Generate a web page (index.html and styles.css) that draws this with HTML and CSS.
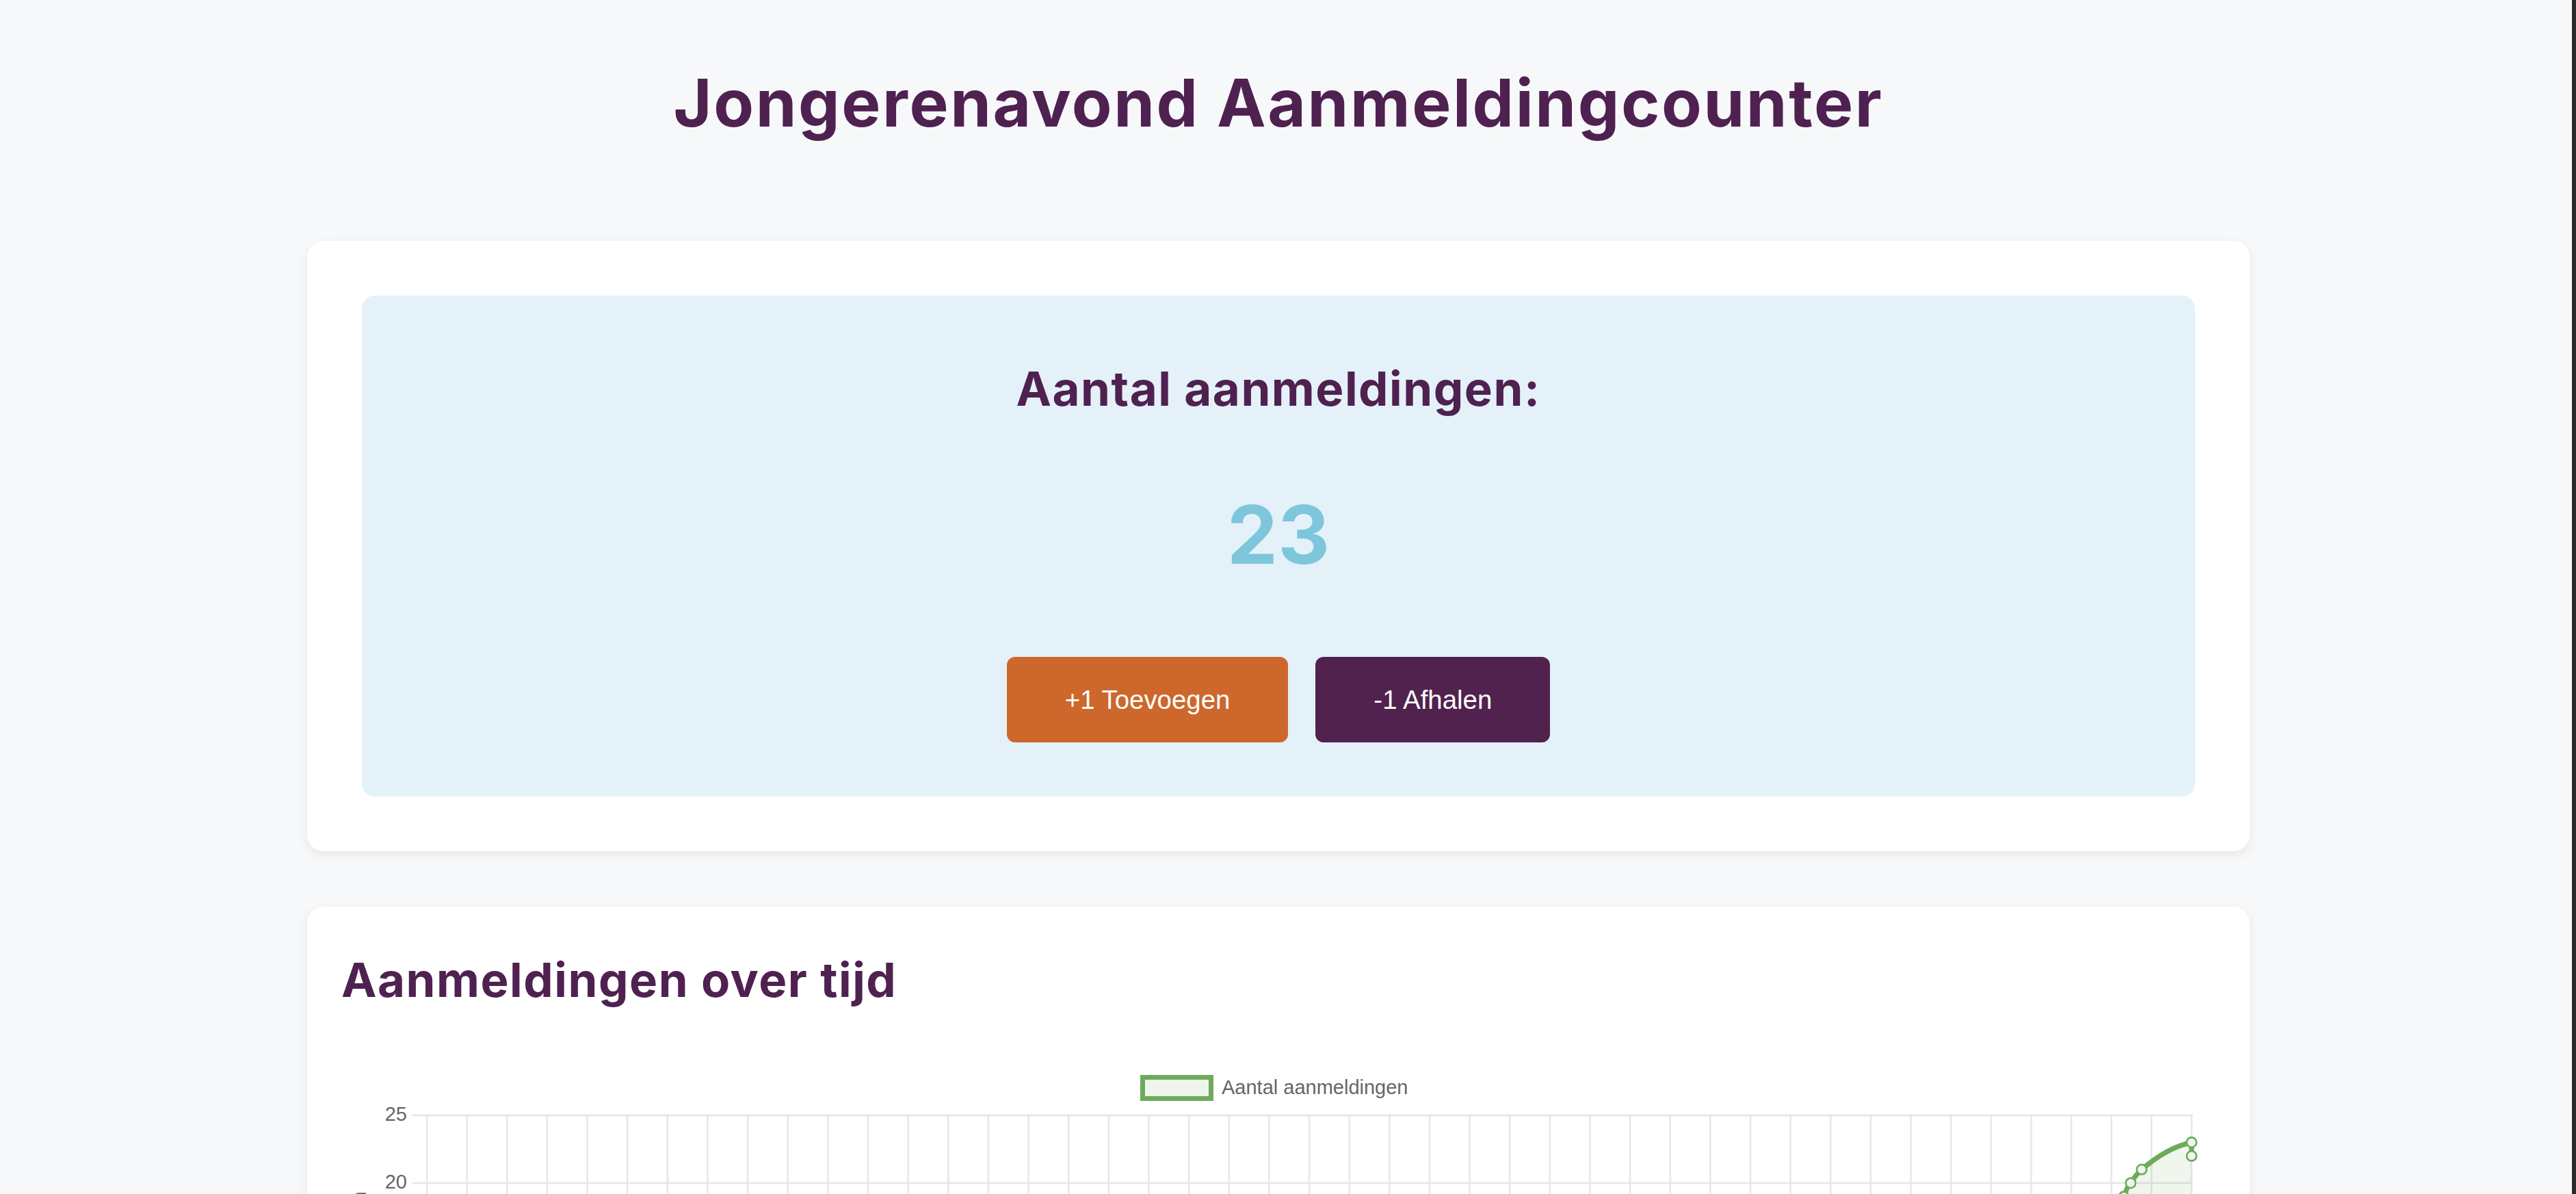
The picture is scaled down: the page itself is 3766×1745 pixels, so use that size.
FILE: index.html
```html
<!DOCTYPE html>
<html lang="nl">
<head>
<meta charset="utf-8">
<title>Jongerenavond Aanmeldingcounter</title>
<link rel="stylesheet" href="styles.css">
</head>
<body>
<div class="page">
  <div class="container">
    <h1 class="title">Jongerenavond Aanmeldingcounter</h1>

    <section class="card counter-card">
      <div class="counter-box">
        <h2 class="counter-label">Aantal aanmeldingen:</h2>
        <div class="count">23</div>
        <div class="actions">
          <button class="btn btn-add">+1 Toevoegen</button>
          <button class="btn btn-remove">-1 Afhalen</button>
        </div>
      </div>
    </section>

    <section class="card chart-card">
      <h2 class="chart-title">Aanmeldingen over tijd</h2>
      <svg class="chart" width="2740" height="700" viewBox="0 0 2740 700">
        <defs>
          <pattern id="vgrid" patternUnits="userSpaceOnUse" x="123.8" y="0" width="58.636" height="700">
            <rect x="0" y="0" width="2.4" height="700" fill="#e5e5e5"/>
          </pattern>
        </defs>
        <!-- legend -->
        <rect x="1171.5" y="53.5" width="100" height="31" fill="#eef5ec" stroke="#6dab5b" stroke-width="7"/>
        <text class="lbl" x="1287" y="78">Aantal aanmeldingen</text>

        <!-- vertical grid -->
        <rect x="123.8" y="109" width="2583.6" height="514" fill="url(#vgrid)"/>
        <!-- horizontal grid -->
        <g stroke="#e5e5e5" stroke-width="2.4">
          <line x1="104" y1="109" x2="2707" y2="109"/>
          <line x1="104" y1="208" x2="2707" y2="208"/>
          <line x1="104" y1="307" x2="2707" y2="307"/>
          <line x1="104" y1="406" x2="2707" y2="406"/>
          <line x1="104" y1="505" x2="2707" y2="505"/>
          <line x1="104" y1="604" x2="2707" y2="604"/>
        </g>
        <!-- y labels -->
        <g class="lbl" text-anchor="end">
          <text x="96" y="117">25</text>
          <text x="96" y="216">20</text>
          <text x="96" y="315">15</text>
          <text x="96" y="414">10</text>
          <text x="96" y="513">5</text>
          <text x="96" y="612">0</text>
        </g>
        <text class="lbl" text-anchor="middle" transform="translate(36 356.5) rotate(-90)">Aantal aanmeldingen</text>

        <!-- data -->
        <path d="M 2594 604 L 2594 330 C 2597 290, 2598 265, 2600 247.6 C 2602 240, 2603 234, 2606 227.8 C 2609 218, 2612 212, 2616 208 C 2621 200, 2626 193, 2632 188.2 C 2658 166, 2683 153, 2705 148.6 L 2705 604 Z" fill="rgba(109,171,91,0.1)"/>
        <path d="M 2594 330 C 2597 290, 2598 265, 2600 247.6 C 2602 240, 2603 234, 2606 227.8 C 2609 218, 2612 212, 2616 208 C 2621 200, 2626 193, 2632 188.2 C 2658 166, 2683 153, 2705 148.6 L 2705 168.4" fill="none" stroke="#6dab5b" stroke-width="7.2" stroke-linejoin="round"/>
        <g fill="#eef5ec" stroke="#6dab5b" stroke-width="2.6">
          <circle cx="2705" cy="148.6" r="7.2"/>
          <circle cx="2705" cy="168.4" r="7.2"/>
          <circle cx="2632" cy="188.2" r="7.2"/>
          <circle cx="2616" cy="208" r="7.2"/>
          <circle cx="2606" cy="227.8" r="7.2"/>
          <circle cx="2600" cy="247.6" r="7.2"/>
        </g>
      </svg>
    </section>
  </div>
</div>
</body>
</html>
```
FILE: styles.css
```css
html {
  background: #f7f8fa;
  border-right: 6px solid #2b2b2b;
}

body {
  margin: 0;
  font-family: Inter, "Noto Sans", sans-serif;
  color: #4f2150;
}

.page {
  padding-right: 22px;
}

.container {
  width: 2840px;
  margin: 0 auto;
}

.title {
  margin: 92px 0 144px;
  font-size: 96px;
  line-height: 116px;
  font-weight: 700;
  letter-spacing: 2.6px;
  text-align: center;
}

.card {
  background: #ffffff;
  border-radius: 24px;
  box-shadow: 0 5px 16px rgba(0, 0, 0, 0.07);
}

.counter-card {
  padding: 80px;
}

.counter-box {
  background: #e4f1f8;
  border-radius: 19px;
  padding: 80px 80px 79px;
  text-align: center;
}

.counter-label {
  margin: 14px 0 0;
  font-size: 69px;
  line-height: 84px;
  font-weight: 700;
  letter-spacing: 1.5px;
}

.count {
  margin-top: 100px;
  font-size: 118px;
  line-height: 143px;
  font-weight: 700;
  color: #7ec6dc;
}

.actions {
  margin-top: 107px;
  display: flex;
  justify-content: center;
  gap: 40px;
}

.btn {
  font-family: "Liberation Sans", Arial, sans-serif;
  font-size: 38.4px;
  line-height: 45px;
  padding: 40px 85px;
  border: 0;
  border-radius: 12px;
  color: #ffffff;
  cursor: pointer;
}

.btn-add {
  background: #cd672c;
}

.btn-remove {
  background: #51224e;
}

.chart-card {
  margin-top: 81px;
  padding: 48px 50px;
}

.chart-title {
  margin: 17px 0 47px;
  font-size: 69px;
  line-height: 84px;
  font-weight: 700;
  letter-spacing: 1.5px;
}

.chart {
  display: block;
}

.lbl {
  font-family: "Liberation Sans", Arial, sans-serif;
  font-size: 29px;
  fill: #666666;
}
```
